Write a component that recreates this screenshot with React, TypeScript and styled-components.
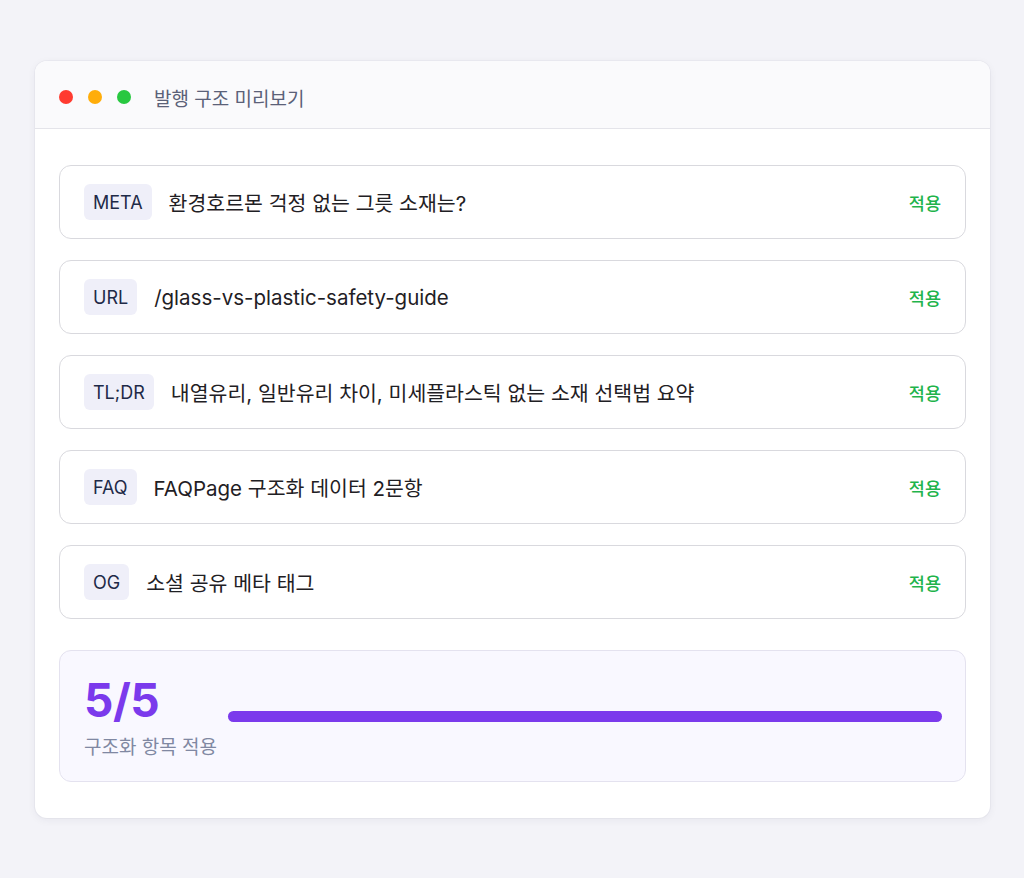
import React from "react";
import styled, { createGlobalStyle } from "styled-components";

const GlobalStyle = createGlobalStyle`
  html, body {
    margin: 0;
    padding: 0;
    background: #f3f3f8;
    font-family: Inter, "Noto Sans CJK KR", sans-serif;
  }
`;

const items = [
  { tag: "META", text: "환경호르몬 걱정 없는 그릇 소재는?" },
  { tag: "URL", text: "/glass-vs-plastic-safety-guide" },
  { tag: "TL;DR", text: "내열유리, 일반유리 차이, 미세플라스틱 없는 소재 선택법 요약" },
  { tag: "FAQ", text: "FAQPage 구조화 데이터 2문항" },
  { tag: "OG", text: "소셜 공유 메타 태그" },
];

export default function App() {
  const done = items.length;
  const total = items.length;
  return (
    <>
      <GlobalStyle />
      <Page>
        <Window>
          <TitleBar>
            <Dot color="#ff3b30" />
            <Dot color="#ffad0a" />
            <Dot color="#28c840" />
            <Title>발행 구조 미리보기</Title>
          </TitleBar>
          <Body>
            {items.map((it) => (
              <Row key={it.tag}>
                <Tag>{it.tag}</Tag>
                <RowText>{it.text}</RowText>
                <Status>적용</Status>
              </Row>
            ))}
            <Summary>
              <Score>
                <Big>
                  {done}/{total}
                </Big>
                <Caption>구조화 항목 적용</Caption>
              </Score>
              <Track>
                <Fill style={{ width: `${(done / total) * 100}%` }} />
              </Track>
            </Summary>
          </Body>
        </Window>
      </Page>
    </>
  );
}

const Page = styled.div`
  padding: 61px 34px 61px 35px;
`;

const Window = styled.div`
  background: #fff;
  border-radius: 12px;
  box-shadow: 0 2px 8px rgba(30, 30, 60, 0.06), 0 0 0 1px rgba(30, 30, 60, 0.03);
  overflow: hidden;
`;

const TitleBar = styled.div`
  height: 68px;
  box-sizing: border-box;
  display: flex;
  align-items: center;
  padding: 5px 24px 0;
  background: #fafafc;
  border-bottom: 1px solid #e4e4ea;
  gap: 15px;
`;

const Dot = styled.span<{ color: string }>`
  width: 14px;
  height: 14px;
  border-radius: 50%;
  background: ${(p) => p.color};
`;

const Title = styled.span`
  margin-left: 8px;
  font-size: 19px;
  color: #5b6178;
`;

const Body = styled.div`
  padding: 36px 24px 36px;
  display: flex;
  flex-direction: column;
  gap: 21px;
`;

const Row = styled.div`
  height: 74px;
  box-sizing: border-box;
  border: 1.5px solid #d9d9de;
  border-radius: 12px;
  display: flex;
  align-items: center;
  padding: 0 24px;
  gap: 17px;
`;

const Tag = styled.span`
  height: 36px;
  display: inline-flex;
  align-items: center;
  padding: 0 9px;
  background: #efeff9;
  border-radius: 6px;
  font-size: 18px;
  color: #1e2a48;
`;

const RowText = styled.span`
  flex: 1;
  font-size: 20.5px;
  color: #1f2024;
`;

const Status = styled.span`
  font-size: 17.5px;
  font-weight: 500;
  color: #1fb44c;
`;

const Summary = styled.div`
  margin-top: 10px;
  height: 132px;
  box-sizing: border-box;
  background: #f9f8ff;
  border: 1.5px solid #e4e2ef;
  border-radius: 12px;
  display: flex;
  align-items: center;
  padding: 0 23px 0 24px;
  gap: 11px;
`;

const Score = styled.div`
  display: flex;
  flex-direction: column;
  gap: 6px;
`;

const Big = styled.div`
  font-size: 46px;
  font-weight: 700;
  line-height: 52px;
  color: #7b3aec;
  letter-spacing: -0.5px;
`;

const Caption = styled.div`
  font-size: 19px;
  color: #8088a2;
`;

const Track = styled.div`
  flex: 1;
  height: 11px;
  border-radius: 6px;
  background: #ece8fb;
`;

const Fill = styled.div`
  height: 100%;
  border-radius: 6px;
  background: #7b3aec;
`;
